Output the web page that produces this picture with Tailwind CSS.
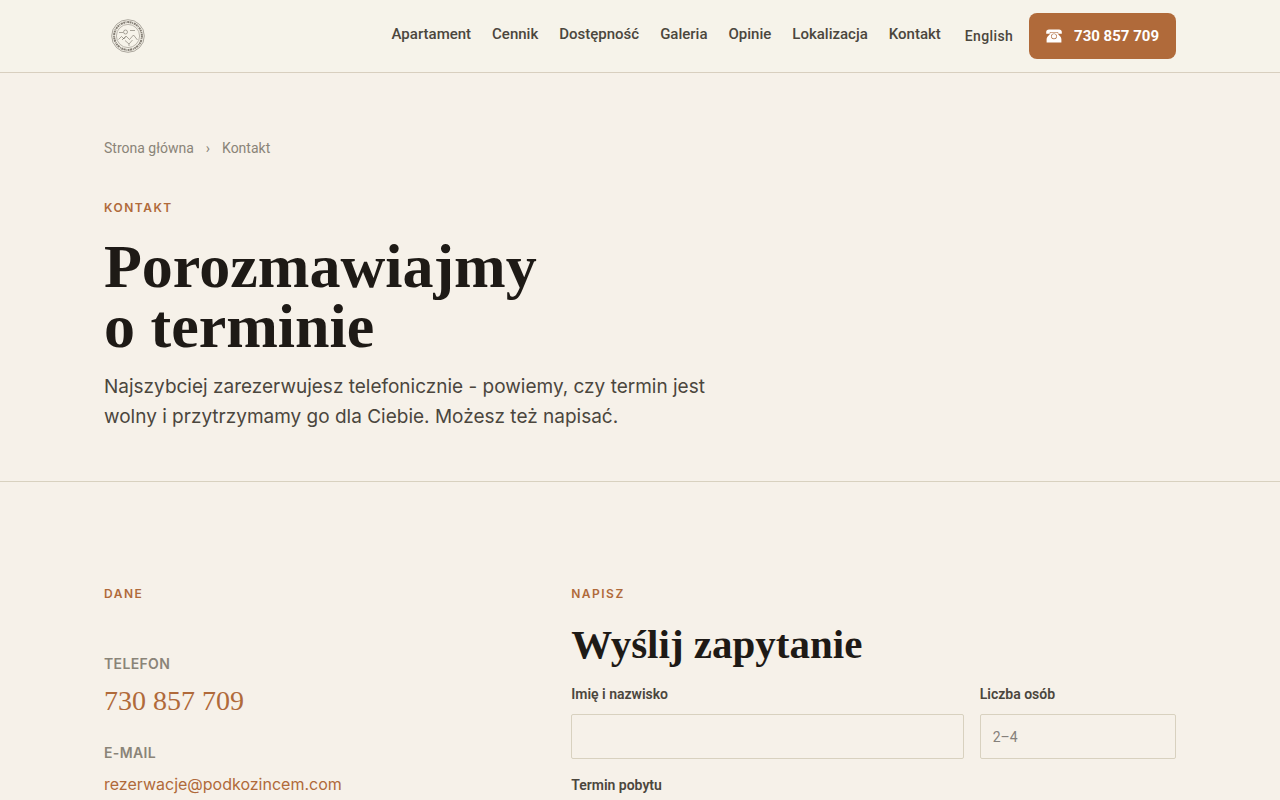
<!doctype html>
<html lang="pl">
  <head>
    <meta charset="UTF-8" />
    <meta name="viewport" content="width=device-width, initial-scale=1.0" />
    <title>Kontakt</title>
    <script src="https://cdn.jsdelivr.net/npm/@tailwindcss/browser@4"></script>
  </head>
  <body
    class="bg-[#f6f1e9] text-[#4b463d] font-['Roboto','Liberation_Sans',sans-serif] min-h-screen"
  >
    <header class="bg-[#f6f3ea] border-b border-[#d8cfbf]">
      <div
        class="max-w-[1120px] mx-auto px-6 h-18 flex items-center justify-between"
      >
        <a href="#" aria-label="Strona główna" class="block">
          <svg
            class="w-12 h-12"
            viewBox="0 0 48 48"
            fill="none"
            stroke="#5d574d"
          >
            <circle cx="24" cy="24" r="16.3" stroke-width="0.5" />
            <circle
              cx="24"
              cy="24"
              r="13.9"
              stroke-width="2"
              stroke-dasharray="1.7 0.6 0.9 0.8 2.2 0.5"
              opacity="0.75"
            />
            <circle cx="24" cy="24" r="11.6" stroke-width="0.4" />
            <g stroke-width="0.5" stroke-linejoin="round">
              <circle cx="21.5" cy="20" r="2" />
              <path d="M15 20.5h4M26 18.5h5" />
              <path d="M14.5 27.5l3-3 2.500 2.500 1.500-2" />
              <path d="M18 28l4-4 3.5 3.5 4-4.5 4 5" />
              <path d="M21 28.5l4 3.500 3.500-4M25 32v2" />
            </g>
          </svg>
        </a>

        <div class="flex items-center">
          <nav
            class="flex gap-[21px] mr-6 pb-1 text-[15px] leading-6 font-medium"
          >
            <a href="#">Apartament</a>
            <a href="#">Cennik</a>
            <a href="#">Dostępność</a>
            <a href="#">Galeria</a>
            <a href="#">Opinie</a>
            <a href="#">Lokalizacja</a>
            <a href="#">Kontakt</a>
          </nav>
          <a href="#" class="mr-4 text-sm leading-5 font-medium tracking-wide"
            >English</a
          >
          <a
            href="tel:730857709"
            class="flex items-center gap-3 h-[46px] px-[17px] rounded-lg bg-[#b06a3a] text-white text-[15px] font-bold"
          >
            <svg class="w-4 h-[14px]" viewBox="0 0 16 14" fill="currentColor">
              <path
                d="M3 0.500h10c1.800 0 2.800 1 2.800 2.500v1.700h-3.600V3.300H3.800v1.400H0.200V3c0-1.500 1-2.500 2.800-2.500z"
              />
              <path
                fill-rule="evenodd"
                d="M4.500 3.800h7l0.700 1.500 2.300 2.500c0.700 0.900 0.900 1.800 0.900 3v2.700H0.600v-2.700c0-1.200 0.200-2.100 0.900-3l2.300-2.500zM8 4.400a2.900 2.900 0 1 0 0 5.800 2.900 2.900 0 0 0 0-5.800z"
              />
              <circle cx="8" cy="7.3" r="2.2" />
            </svg>
            730 857 709
          </a>
        </div>
      </div>
    </header>

    <main>
      <!-- Intro -->
      <section class="border-b border-[#d8d1bf]">
        <div class="max-w-[1120px] mx-auto px-6 pt-16 pb-[49px]">
          <nav class="flex gap-3 mb-10 text-sm leading-[22px] text-[#8a8478]">
            <a href="#">Strona główna</a>
            <span>›</span>
            <span>Kontakt</span>
          </nav>
          <p
            class="mb-[19px] font-['Inter',sans-serif] text-xs leading-[18px] font-semibold tracking-[1.5px] text-[#b06a3a]"
          >
            KONTAKT
          </p>
          <h1
            class="mb-4 font-['Liberation_Serif',serif] text-[62px] leading-[60px] font-bold text-[#1e1a16]"
          >
            Porozmawiajmy<br />o terminie
          </h1>
          <p class="font-['Inter',sans-serif] text-[19px] leading-[30px]">
            Najszybciej zarezerwujesz telefonicznie - powiemy, czy termin jest<br />
            wolny i przytrzymamy go dla Ciebie. Możesz też napisać.
          </p>
        </div>
      </section>

      <!-- Contact details and form -->
      <section
        class="max-w-[1120px] mx-auto px-6 pt-[103px] pb-24 grid grid-cols-[2fr_3fr] gap-16"
      >
        <div class="font-['Inter',sans-serif]">
          <p
            class="mb-[51px] text-xs leading-[18px] font-semibold tracking-[1.5px] text-[#b06a3a]"
          >
            DANE
          </p>
          <dl>
            <dt
              class="mb-[9px] text-sm leading-5 font-semibold tracking-wide text-[#8a8478]"
            >
              TELEFON
            </dt>
            <dd
              class="mb-6 font-['Liberation_Serif',serif] text-[28px] leading-9 text-[#b06a3a]"
            >
              <a href="tel:730857709">730 857 709</a>
            </dd>
            <dt
              class="mb-[9px] text-sm leading-5 font-semibold tracking-wide text-[#8a8478]"
            >
              E-MAIL
            </dt>
            <dd class="text-base leading-6 text-[#b06a3a]">
              <a href="mailto:rezerwacje@podkozincem.com"
                >rezerwacje@podkozincem.com</a
              >
            </dd>
          </dl>
        </div>

        <div>
          <p
            class="mb-[17px] font-['Inter',sans-serif] text-xs leading-[18px] font-semibold tracking-[1.5px] text-[#b06a3a]"
          >
            NAPISZ
          </p>
          <h2
            class="mb-4 font-['Liberation_Serif',serif] text-[41px] leading-[48px] font-bold text-[#1e1a16]"
          >
            Wyślij zapytanie
          </h2>
          <form class="grid grid-cols-[2fr_1fr] gap-4">
            <div>
              <label
                class="block mb-[10px] text-sm leading-5 font-semibold"
                for="name"
                >Imię i nazwisko</label
              >
              <input
                class="block w-full h-[45px] px-3 border border-[#d8d1bf] rounded-xs"
                id="name"
                type="text"
              />
            </div>
            <div>
              <label
                class="block mb-[10px] text-sm leading-5 font-semibold"
                for="guests"
                >Liczba osób</label
              >
              <input
                class="block w-full h-[45px] px-3 border border-[#d8d1bf] rounded-xs text-sm placeholder:text-[#85807a]"
                id="guests"
                type="text"
                placeholder="2–4"
              />
            </div>
            <div class="col-span-2">
              <label
                class="block mb-[10px] text-sm leading-5 font-semibold"
                for="dates"
                >Termin pobytu</label
              >
              <input
                class="block w-full h-[45px] px-3 border border-[#d8d1bf] rounded-xs"
                id="dates"
                type="text"
              />
            </div>
          </form>
        </div>
      </section>
    </main>
  </body>
</html>
